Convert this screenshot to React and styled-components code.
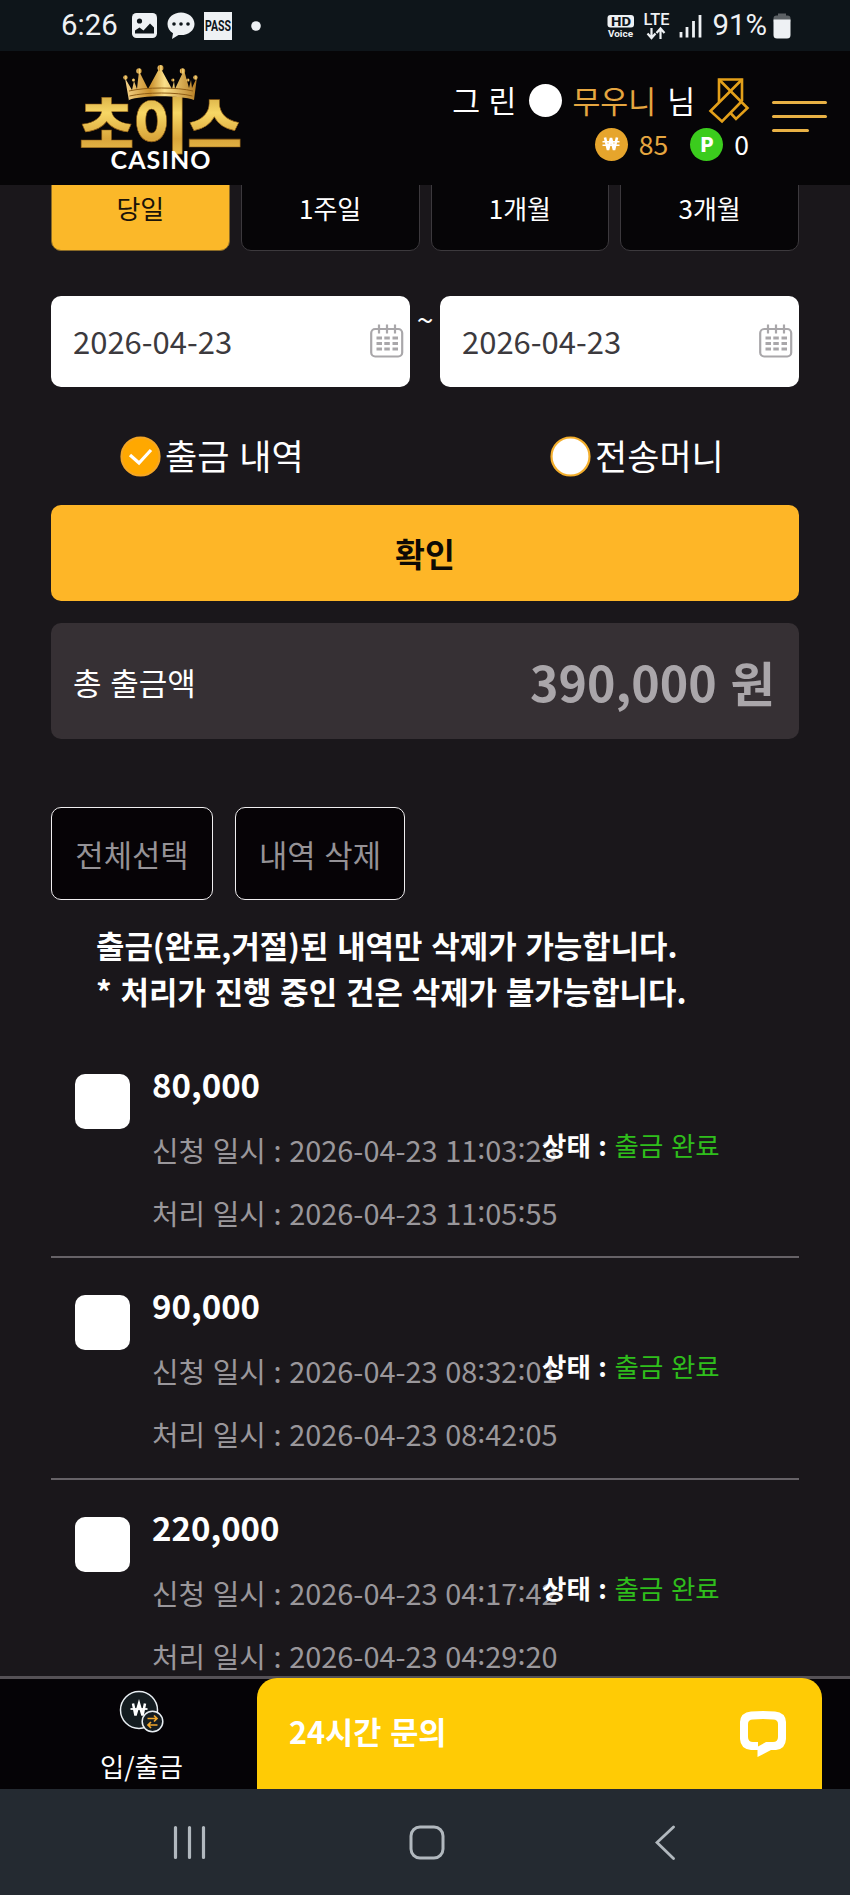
import React from 'react'
import styled, { createGlobalStyle } from 'styled-components'

const GlobalStyle = createGlobalStyle`
  * {
    box-sizing: border-box;
    word-spacing: 0.06em;
  }
  body {
    margin: 0;
    background: #1a171b;
    color: #fff;
    font-family: 'Noto Sans CJK KR', sans-serif;
  }
  button {
    font-family: inherit;
    padding: 0;
    border: 0;
  }
`

const Phone = styled.div`
  display: flex;
  flex-direction: column;
  width: 850px;
  height: 1895px;
  overflow: hidden;
  white-space: nowrap;
`

/* status bar */

const StatusBar = styled.div`
  display: flex;
  flex: none;
  align-items: center;
  justify-content: space-between;
  height: 51px;
  padding: 0 59px 0 61px;
  background: #0e151a;
  color: #eef1f4;
  font-family: Roboto, sans-serif;
`

const StatusGroup = styled.div`
  display: flex;
  align-items: center;
`

const StatusText = styled.span`
  margin-left: ${props => props.$gap || 0}px;
  font-size: 29.4px;
  line-height: 51px;
`

const StatusIcon = styled.svg`
  display: block;
  flex: none;
  margin-left: ${props => props.$gap || 0}px;
  overflow: visible;
`

/* header */

const Header = styled.header`
  display: flex;
  flex: none;
  height: 134px;
  padding: 0 23px 0 80px;
  background: #060507;
`

const Logo = styled.svg`
  display: block;
  flex: none;
  margin-top: 12px;
`

const UserBox = styled.div`
  display: flex;
  flex-direction: column;
  align-items: flex-end;
  flex: 1;
  padding-top: 26px;
`

const UserLine = styled.div`
  display: flex;
  align-items: center;
  height: 46px;
  font-size: 30.3px;
  line-height: 46px;
`

const LevelDot = styled.i`
  width: 33px;
  height: 33px;
  margin: 0 11px 0 12px;
  border-radius: 50%;
  background: #fff;
`

const Nickname = styled.span`
  margin-right: 11px;
  color: #e5a640;
`

const MoneyLine = styled.div`
  display: flex;
  align-items: center;
  height: 42px;
  font-size: 26.5px;
  line-height: 42px;
`

const Coin = styled.i`
  display: flex;
  align-items: center;
  justify-content: center;
  width: 33px;
  height: 33px;
  margin-right: 11px;
  padding-bottom: 1px;
  border-radius: 50%;
  background: ${props => props.$color};
  color: #fff;
  font-size: 20px;
  font-style: normal;
  font-weight: 900;
  line-height: 32px;
`

const Money = styled.span`
  margin-right: ${props => props.$gap || 0}px;
  color: ${props => props.$color || '#fff'};
`

const MenuButton = styled.button`
  display: flex;
  flex-direction: column;
  gap: 11px;
  width: 55px;
  margin: 50px 0 0 23px;
  background: none;
`

const MenuBar = styled.span`
  width: ${props => props.$width}px;
  height: 3px;
  border-radius: 2px;
  background: #e8b145;
`

/* content */

const Content = styled.main`
  flex: 1;
  min-height: 0;
  padding: 0 51px;
  overflow: hidden;
`

const Tabs = styled.div`
  display: grid;
  grid-template-columns: repeat(4, 1fr);
  gap: 11px;
  margin-top: -20px;
`

const Tab = styled.button`
  height: 86px;
  border: 1.5px solid ${props => (props.$active ? '#8a6a26' : '#3c393d')};
  border-radius: 10px;
  background: ${props => (props.$active ? '#fbb829' : '#060507')};
  color: ${props => (props.$active ? '#1a1308' : '#fff')};
  font-size: 26px;
  line-height: 38px;
`

const DateRange = styled.div`
  display: flex;
  margin-top: 45px;
`

const DateField = styled.div`
  display: flex;
  align-items: center;
  justify-content: space-between;
  width: 359px;
  height: 91px;
  padding: 0 6px 2px 22px;
  border-radius: 10px;
  background: #fff;
  color: #3c3a3e;
  font-size: 31px;
`

const Tilde = styled.span`
  flex: 1;
  font-size: 30px;
  line-height: 44px;
  text-align: center;
`

const Radios = styled.div`
  display: flex;
  height: 118px;
  padding: 22px 0 0 69px;
`

const RadioLabel = styled.label`
  display: flex;
  flex: none;
  align-items: center;
  width: 430px;
  height: 95px;
  gap: 4px;
  font-size: 35px;
  line-height: 52px;
  span {
    margin-bottom: 3px;
  }
`

const Confirm = styled.button`
  width: 100%;
  height: 96px;
  padding-bottom: 2px;
  border-radius: 10px;
  background: #feb627;
  color: #0d0a05;
  font-size: 32.5px;
  font-weight: 700;
`

const Total = styled.div`
  display: flex;
  align-items: center;
  justify-content: space-between;
  height: 116px;
  margin-top: 22px;
  padding: 0 24px 0 22px;
  border-radius: 10px;
  background: #363034;
  font-size: 31px;
`

const TotalValue = styled.strong`
  color: #aaa6aa;
  font-size: 48.3px;
  font-weight: 700;
`

const Actions = styled.div`
  display: flex;
  gap: 22px;
  margin-top: 68px;
`

const ActionButton = styled.button`
  width: ${props => props.$width}px;
  height: 93px;
  padding-bottom: 1px;
  border: 1.5px solid #f0eef0;
  border-radius: 10px;
  background: #060306;
  color: #959296;
  font-size: 30.8px;
`

const Notice = styled.p`
  margin: 22px 0 0 45px;
  font-size: 30.9px;
  font-weight: 700;
  line-height: 46px;
`

const List = styled.ul`
  margin: 23px 0 0;
  padding: 0;
  list-style: none;
`

const Item = styled.li`
  position: relative;
  display: flex;
  height: 221.3px;
  padding: 37px 0 0 24px;
  border-bottom: 2px solid #666267;
`

const CheckBox = styled.span`
  flex: none;
  width: 55px;
  height: 55px;
  margin-right: 22px;
  border-radius: 10px;
  background: #fff;
`

const Amount = styled.div`
  margin: -14px 0 10px;
  font-size: 33px;
  font-weight: 700;
  line-height: 48px;
`

const When = styled.div`
  height: 63px;
  color: #9a979b;
  font-size: 28.9px;
  line-height: 63px;
  word-spacing: 0.04em;
`

/* colon of a clock time, centred on the digits */
const Colon = styled.span`
  position: relative;
  top: -3px;
`

/* sits over the end of the request date */
const State = styled.div`
  position: absolute;
  left: 491px;
  top: 85px;
  font-size: 26.5px;
  line-height: 46px;
  font-weight: 700;
  span {
    color: #2fbe1c;
    font-weight: 400;
  }
`

/* bottom */

const BottomBar = styled.nav`
  display: flex;
  flex: none;
  height: 113px;
  border-top: 3px solid #555156;
  background: #050306;
`

const Deposit = styled.div`
  display: flex;
  flex-direction: column;
  align-items: center;
  width: 257px;
  padding: 11px 0 0 26px;
  font-size: 26.3px;
  line-height: 38px;
  svg {
    margin-bottom: 13px;
  }
`

const Inquiry = styled.div`
  display: flex;
  align-items: center;
  justify-content: space-between;
  width: 565px;
  height: 112px;
  margin-top: -1px;
  padding: 0 35px 0 32px;
  border-radius: 20px 20px 0 0;
  background: #ffcb05;
  font-size: 30.6px;
  font-weight: 700;
  span {
    margin-bottom: 6px;
  }
`

const SystemNav = styled.div`
  display: flex;
  flex: none;
  height: 106px;
  padding: 36px 174px 0 173px;
  justify-content: space-between;
  background: #242a31;
`

const HomeIcon = styled.svg`
  margin-right: 8px;
`

const CalendarIcon = () => (
  <svg width="34" height="34" viewBox="0 0 34 34" fill="none" stroke="#a9a7aa" strokeWidth="2.2">
    <rect x="1.2" y="5" width="31" height="27.5" rx="4" />
    <path d="M9 0.5v9M17 0.5v9M25 0.5v9" />
    <path d="M6.5 14h5.5M14.3 14h5.5M22.5 14H28M6.5 19.5h5.5M14.3 19.5h5.5M22.5 19.5H28M6.5 25h5.5M14.3 25h5.5M22.5 25H28" strokeWidth="2.8" />
  </svg>
)

const RadioIcon = ({ checked }) => (
  <svg width="41" height="41" viewBox="0 0 41 41">
    <circle cx="20.5" cy="20.5" r="19" fill={checked ? '#ffa800' : '#fff'} stroke={checked ? '#f5a623' : '#f3ae2c'} strokeWidth="2.2" />
    {checked && <path d="M10 19l9 8 12-13" fill="none" stroke="#fff" strokeWidth="3.2" />}
  </svg>
)

const LogoArt = () => (
  <Logo width="162" height="110" viewBox="80 63 162 110">
    <defs>
      <linearGradient id="gold" x1="0" y1="0" x2="0" y2="1">
        <stop offset="0" stopColor="#b98726" />
        <stop offset="0.4" stopColor="#f7d765" />
        <stop offset="0.7" stopColor="#d9a53a" />
        <stop offset="1" stopColor="#f3cc58" />
      </linearGradient>
      <linearGradient id="crown" x1="0" y1="0" x2="1" y2="0">
        <stop offset="0" stopColor="#f6d58a" />
        <stop offset="0.35" stopColor="#c98f2c" />
        <stop offset="0.55" stopColor="#fbe08a" />
        <stop offset="1" stopColor="#b57c22" />
      </linearGradient>
    </defs>
    <g fill="url(#gold)" stroke="#8a5a14" strokeWidth="0.6" fontFamily="'Noto Sans CJK KR', sans-serif" fontWeight="900" fontSize="60">
      <text x="79" y="148">초</text>
      <text x="133" y="148">이</text>
      <text x="187" y="148">스</text>
    </g>
    <g fill="url(#crown)">
      <path d="M129 101L125 78l7 12 2-9 3 8 2-18 9 18 12-22 12 22 2-8 1 8 9-19 5 18 2-8 1 8 5-11-3 23c-14-5-52-5-65 0z" />
      <circle cx="125.500" cy="77.500" r="2.200" />
      <circle cx="139" cy="71" r="2.700" />
      <circle cx="160.500" cy="68" r="3" />
      <circle cx="182.500" cy="71" r="2.700" />
      <circle cx="195.500" cy="77.500" r="2.200" />
      <circle cx="133.500" cy="80" r="1.600" />
      <circle cx="173" cy="80" r="1.600" />
      <circle cx="188" cy="80" r="1.600" />
    </g>
    <path d="M129 91c17-4 48-4 64 0M129.500 96c17-4 47-4 63 0" fill="none" stroke="#8f5e17" strokeWidth="1" />
    <text x="110.500" y="169" fill="#fff" fontFamily="Lato, sans-serif" fontWeight="700" fontSize="25" textLength="100" lengthAdjust="spacing">CASINO</text>
  </Logo>
)

const items = [
  { amount: '80,000', requested: '2026-04-23 11:03:23', processed: '2026-04-23 11:05:55' },
  { amount: '90,000', requested: '2026-04-23 08:32:01', processed: '2026-04-23 08:42:05' },
  { amount: '220,000', requested: '2026-04-23 04:17:42', processed: '2026-04-23 04:29:20' },
]

const tabs = ['당일', '1주일', '1개월', '3개월']

const DateTime = ({ value }) => value.split(':').map((part, i) => (
  <React.Fragment key={i}>{i > 0 && <Colon>:</Colon>}{part}</React.Fragment>
))

const App = () => (
  <>
    <GlobalStyle />
    <Phone>
      <StatusBar>
        <StatusGroup>
          <StatusText>6:26</StatusText>
          <StatusIcon $gap={14} width="25" height="25" viewBox="0 0 25 25">
            <rect width="25" height="25" rx="4.500" fill="#eef1f4" />
            <circle cx="7.500" cy="8" r="2.600" fill="#0e151a" />
            <path d="M3 20.500v-3l4.500-3 4 3 6.500-7 4 4v6z" fill="#0e151a" />
          </StatusIcon>
          <StatusIcon $gap={10} width="28" height="28" viewBox="0 0 28 28">
            <path d="M14 .5C6.500.5.500 5.500.500 12c0 4 2 7 5.500 9.300L5 27l6.500-4C21 24 27.500 18.500 27.500 12 27.500 5.500 21.500.500 14 .500z" fill="#eef1f4" />
            <circle cx="7" cy="12" r="1.800" fill="#0e151a" />
            <circle cx="14" cy="12" r="1.800" fill="#0e151a" />
            <circle cx="21" cy="12" r="1.800" fill="#0e151a" />
          </StatusIcon>
          <StatusIcon $gap={9} width="28" height="28" viewBox="0 0 28 28">
            <rect width="28" height="28" fill="#eef1f4" />
            <text x="1" y="19" fontSize="14" fontWeight="700" fill="#0e151a" textLength="26" lengthAdjust="spacingAndGlyphs">PASS</text>
          </StatusIcon>
          <StatusIcon $gap={19} width="10" height="10" viewBox="0 0 10 10">
            <circle cx="5" cy="5" r="4.800" fill="#eef1f4" />
          </StatusIcon>
        </StatusGroup>
        <StatusGroup>
          <StatusIcon width="28" height="26" viewBox="0 0 28 26">
            <rect x="0.500" y="2" width="26.500" height="12.500" rx="3" fill="#eef1f4" />
            <text x="4" y="12.500" fontSize="12" fontWeight="800" fill="#0e151a" textLength="20" lengthAdjust="spacingAndGlyphs">HD</text>
            <text x="1" y="24" fontSize="9.500" fontWeight="700" fill="#eef1f4" textLength="25" lengthAdjust="spacingAndGlyphs">Voice</text>
          </StatusIcon>
          <StatusIcon $gap={8} width="28" height="28" viewBox="0 0 28 28">
            <text x="0.500" y="13" fontSize="16" fontWeight="500" fill="#eef1f4" textLength="26" lengthAdjust="spacingAndGlyphs">LTE</text>
            <path d="M8.500 16v9.500M4.500 21.500l4 4.500 4-4.500M17.500 27v-9.500M13.500 21l4-4.500 4 4.500" fill="none" stroke="#eef1f4" strokeWidth="2.200" />
          </StatusIcon>
          <StatusIcon $gap={8} width="23" height="24" viewBox="0 0 23 24">
            <path d="M2 18v5.500M8 13v10.500M14.500 7v16.500M21 1v22.500" stroke="#eef1f4" strokeWidth="2.800" />
          </StatusIcon>
          <StatusText $gap={10}>91%</StatusText>
          <StatusIcon $gap={6} width="18" height="26" viewBox="0 0 18 26">
            <path d="M5 0.500h8v3H5z" fill="#5c6165" />
            <rect x="0.500" y="2.500" width="17" height="8" rx="3" fill="#5c6165" />
            <path d="M.5 6.500h17v15.500q0 3.500-3.500 3.500H4Q.5 25.500.5 22z" fill="#eef1f4" />
          </StatusIcon>
        </StatusGroup>
      </StatusBar>

      <Header>
        <LogoArt />
        <UserBox>
          <UserLine>
            <span>그 린</span>
            <LevelDot />
            <Nickname>무우니</Nickname>
            <span>님</span>
            <StatusIcon $gap={14} width="40" height="46" viewBox="0 0 40 46" fill="none" stroke="#e3a01a" strokeWidth="2.600">
              <path d="M10 25V2.500h23V24" />
              <path d="M10 2.500L38.500 31 27 42l-5.500-6" />
              <path d="M33 2.500L1.500 34 13 44.500 33 24" />
            </StatusIcon>
          </UserLine>
          <MoneyLine>
            <Coin $color="#e6a52c">
              <svg width="18" height="14" viewBox="0 0 18 14" fill="none" stroke="#fff">
                <path d="M3 .5l3 12.500L9 1l3 12L15 .5" strokeWidth="2.600" />
                <path d="M.5 4.800h17M.5 8.300h17" strokeWidth="1.500" />
              </svg>
            </Coin>
            <Money $gap={22} $color="#e5a640">85</Money>
            <Coin $color="#3bcc1d">P</Coin>
            <Money>0</Money>
          </MoneyLine>
        </UserBox>
        <MenuButton>
          <MenuBar $width={55} />
          <MenuBar $width={55} />
          <MenuBar $width={37} />
        </MenuButton>
      </Header>

      <Content>
        <Tabs>
          {tabs.map((tab, i) => <Tab key={tab} $active={i === 0}>{tab}</Tab>)}
        </Tabs>
        <DateRange>
          <DateField>2026-04-23<CalendarIcon /></DateField>
          <Tilde>~</Tilde>
          <DateField>2026-04-23<CalendarIcon /></DateField>
        </DateRange>
        <Radios>
          <RadioLabel><RadioIcon checked /><span>출금 내역</span></RadioLabel>
          <RadioLabel><RadioIcon /><span>전송머니</span></RadioLabel>
        </Radios>
        <Confirm>확인</Confirm>
        <Total>
          <span>총 출금액</span>
          <TotalValue>390,000 원</TotalValue>
        </Total>
        <Actions>
          <ActionButton $width={162}>전체선택</ActionButton>
          <ActionButton $width={170}>내역 삭제</ActionButton>
        </Actions>
        <Notice>
          출금(완료,거절)된 내역만 삭제가 가능합니다.<br />
          * 처리가 진행 중인 건은 삭제가 불가능합니다.
        </Notice>
        <List>
          {items.map(item => (
            <Item key={item.amount}>
              <CheckBox />
              <div>
                <Amount>{item.amount}</Amount>
                <When>신청 일시 : <DateTime value={item.requested} /></When>
                <When>처리 일시 : <DateTime value={item.processed} /></When>
              </div>
              <State>상태 : <span>출금 완료</span></State>
            </Item>
          ))}
        </List>
      </Content>

      <BottomBar>
        <Deposit>
          <svg width="46" height="44" viewBox="0 0 46 44" fill="none">
            <circle cx="20" cy="20" r="18.500" fill="#141c20" stroke="#e8eef2" strokeWidth="1.500" />
            <path d="M14 13.500l2.500 12 3.500-12 3.500 12 2.500-12" stroke="#fff" strokeWidth="2.500" />
            <path d="M11.500 19h17" stroke="#fff" strokeWidth="1.800" />
            <circle cx="33.500" cy="31.500" r="10.300" fill="#141c20" stroke="#e8eef2" strokeWidth="1.500" />
            <path d="M28.500 28.500h9M35 25.500l3 3-3 3M38.500 35h-9M32 32l-3 3 3 3" stroke="#f0a72c" strokeWidth="1.700" />
          </svg>
          입/출금
        </Deposit>
        <Inquiry>
          <span>24시간 문의</span>
          <svg width="48" height="48" viewBox="0 0 48 48">
            <path d="M12 1.500Q24 .3 36 1.500Q46.500 2.500 47 12V29Q46.500 39 37 40H32L18.500 47V40H12Q1.500 39 1 29V12Q1.500 2.500 12 1.500ZM14 9.500Q9 9.500 9 14V27Q9 32 14 32H19V36.500L27 32H34Q39 32 39 27V14Q39 9.500 34 9.500Q24 8.500 14 9.500Z" fill="#fff" fillRule="evenodd" />
          </svg>
        </Inquiry>
      </BottomBar>

      <SystemNav>
        <svg width="34" height="36" viewBox="0 0 34 36" stroke="#b1b8be" strokeWidth="3.200" strokeLinecap="round">
          <path d="M2.500 2.500v30M16.500 2.500v30M30.500 2.500v30" />
        </svg>
        <HomeIcon width="36" height="36" viewBox="0 0 36 36" fill="none" stroke="#b1b8be" strokeWidth="3">
          <rect x="2" y="2" width="32" height="31" rx="9" />
        </HomeIcon>
        <svg width="21" height="36" viewBox="0 0 21 36" fill="none" stroke="#b1b8be" strokeWidth="2.800" strokeLinecap="round">
          <path d="M18.500 2L2 17.500l16.500 16" />
        </svg>
      </SystemNav>
    </Phone>
  </>
)

export default App
